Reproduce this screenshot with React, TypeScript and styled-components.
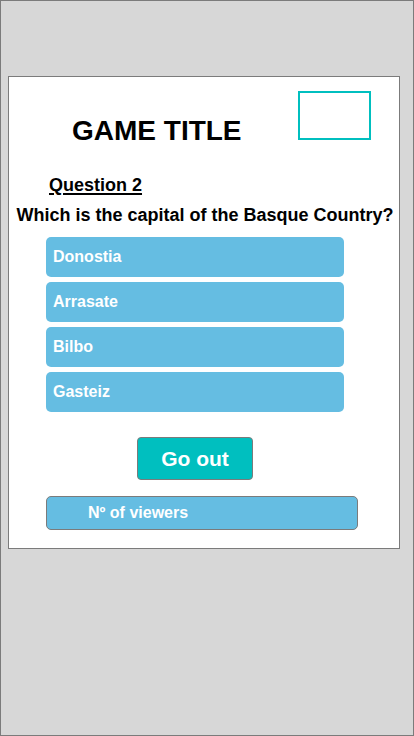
import React from "react";
import styled, { createGlobalStyle } from "styled-components";

const Global = createGlobalStyle`
  html, body { margin: 0; padding: 0; }
  body { font-family: "Liberation Sans", Arial, sans-serif; }
  * { box-sizing: border-box; }
`;

const Frame = styled.div`
  width: 414px;
  height: 736px;
  background: #d7d7d7;
  border: 1px solid #7b7b7b;
  padding: 75px 0 0 7px;
`;

const Panel = styled.div`
  width: 392px;
  height: 473px;
  background: #ffffff;
  border: 1px solid #7b7b7b;
  display: flex;
  flex-direction: column;
`;

const Header = styled.div`
  display: flex;
  align-items: flex-start;
`;

const Title = styled.h1`
  margin: 38px 0 0 63px;
  font-size: 28px;
  line-height: 32px;
  font-weight: bold;
  color: #000;
`;

const Placeholder = styled.div`
  margin: 14px 28px 0 auto;
  width: 73px;
  height: 49px;
  border: 2px solid #00bfbf;
`;

const QuestionLabel = styled.div`
  margin: 28px 0 0 40px;
  font-size: 18px;
  line-height: 21px;
  font-weight: bold;
  color: #000;
  text-decoration: underline;
  text-decoration-thickness: 2px;
  text-underline-offset: 2px;
`;

const QuestionText = styled.div`
  margin-top: 9px;
  padding-left: 2px;
  text-align: center;
  font-size: 18px;
  line-height: 21px;
  font-weight: bold;
  color: #000;
  white-space: nowrap;
`;

const Column = styled.div`
  margin: 11px 0 0 37px;
  width: 298px;
  display: flex;
  flex-direction: column;
`;

const Answers = styled.div`
  display: flex;
  flex-direction: column;
  gap: 5px;
`;

const Answer = styled.div`
  height: 40px;
  background: #65bde2;
  border-radius: 5px;
  display: flex;
  align-items: center;
  padding-left: 7px;
  color: #ffffff;
  font-size: 16px;
  font-weight: bold;
`;

const GoOut = styled.div`
  align-self: center;
  margin-top: 25px;
  width: 116px;
  height: 43px;
  background: #00bfbf;
  border: 1px solid #7b7b7b;
  border-radius: 4px;
  display: flex;
  align-items: center;
  justify-content: center;
  color: #ffffff;
  font-size: 21px;
  font-weight: bold;
`;

const Viewers = styled.div`
  margin: 16px 0 0 37px;
  width: 312px;
  height: 34px;
  background: #65bde2;
  border: 1px solid #7b7b7b;
  border-radius: 5px;
  display: flex;
  align-items: center;
  padding-left: 41px;
  color: #ffffff;
  font-size: 16px;
  font-weight: bold;
`;

const answers = ["Donostia", "Arrasate", "Bilbo", "Gasteiz"];

export default function App() {
  return (
    <>
      <Global />
      <Frame>
        <Panel>
          <Header>
            <Title>GAME TITLE</Title>
            <Placeholder />
          </Header>
          <QuestionLabel>Question 2</QuestionLabel>
          <QuestionText>Which is the capital of the Basque Country?</QuestionText>
          <Column>
            <Answers>
              {answers.map((a) => (
                <Answer key={a}>{a}</Answer>
              ))}
            </Answers>
            <GoOut>Go out</GoOut>
          </Column>
          <Viewers>Nº of viewers</Viewers>
        </Panel>
      </Frame>
    </>
  );
}
